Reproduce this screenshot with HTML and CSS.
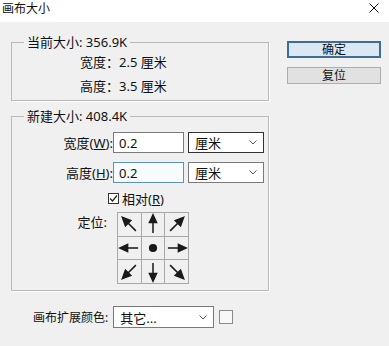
FILE: index.html
```html
<!DOCTYPE html>
<html lang="zh-CN">
<head>
    <meta charset="UTF-8">
    <title>画布大小</title>
    <link rel="stylesheet" href="styles.css">
</head>
<body>
    <div class="dialog">
        <div class="titlebar">
            <span class="title">画布大小</span>
            <svg class="close" width="10" height="10" viewBox="0 0 10 10">
                <line x1="0.5" y1="0.5" x2="9.5" y2="9.5" stroke="#111" stroke-width="1"/>
                <line x1="9.5" y1="0.5" x2="0.5" y2="9.5" stroke="#111" stroke-width="1"/>
            </svg>
        </div>

        <div class="content">
            <div class="main">
                <fieldset class="group group-current">
                    <legend>当前大小: 356.9K</legend>
                    <div class="info-row">宽度：2.5 厘米</div>
                    <div class="info-row">高度：3.5 厘米</div>
                </fieldset>

                <fieldset class="group group-new">
                    <legend>新建大小: 408.4K</legend>

                    <div class="field-row">
                        <label class="field-label" for="newWidth">宽度(<u>W</u>):</label>
                        <input class="text-input" type="text" id="newWidth" value="0.2">
                        <div class="select">
                            <span>厘米</span>
                            <svg class="chevron" width="8" height="5" viewBox="0 0 8 5"><polyline points="0.5,0.5 4,4 7.5,0.5" fill="none" stroke="#555" stroke-width="1"/></svg>
                        </div>
                    </div>

                    <div class="field-row">
                        <label class="field-label" for="newHeight">高度(<u>H</u>):</label>
                        <input class="text-input text-input-focus" type="text" id="newHeight" value="0.2">
                        <div class="select select-light">
                            <span>厘米</span>
                            <svg class="chevron" width="8" height="5" viewBox="0 0 8 5"><polyline points="0.5,0.5 4,4 7.5,0.5" fill="none" stroke="#555" stroke-width="1"/></svg>
                        </div>
                    </div>

                    <div class="check-row">
                        <span class="checkbox">
                            <svg width="9" height="9" viewBox="0 0 9 9"><polyline points="1,4.5 3.5,7 8,1.5" fill="none" stroke="#222" stroke-width="1.2"/></svg>
                        </span>
                        <span>相对(<u>R</u>)</span>
                    </div>

                    <div class="anchor-row">
                        <span class="field-label anchor-label">定位:</span>
                        <div class="anchor-grid">
                            <div class="cell"><svg viewBox="0 0 23 23"><g transform="rotate(-45 11.5 11.5)"><polygon points="11.5,1.5 7.8,9.5 15.2,9.5"/><line x1="11.5" y1="9" x2="11.5" y2="20.5"/></g></svg></div>
                            <div class="cell"><svg viewBox="0 0 23 23"><g><polygon points="11.5,1.5 7.8,9.5 15.2,9.5"/><line x1="11.5" y1="9" x2="11.5" y2="20.5"/></g></svg></div>
                            <div class="cell"><svg viewBox="0 0 23 23"><g transform="rotate(45 11.5 11.5)"><polygon points="11.5,1.5 7.8,9.5 15.2,9.5"/><line x1="11.5" y1="9" x2="11.5" y2="20.5"/></g></svg></div>
                            <div class="cell"><svg viewBox="0 0 23 23"><g transform="rotate(-90 11.5 11.5)"><polygon points="11.5,1.5 7.8,9.5 15.2,9.5"/><line x1="11.5" y1="9" x2="11.5" y2="20.5"/></g></svg></div>
                            <div class="cell"><svg viewBox="0 0 23 23"><circle cx="11.5" cy="11.5" r="3.5"/></svg></div>
                            <div class="cell"><svg viewBox="0 0 23 23"><g transform="rotate(90 11.5 11.5)"><polygon points="11.5,1.5 7.8,9.5 15.2,9.5"/><line x1="11.5" y1="9" x2="11.5" y2="20.5"/></g></svg></div>
                            <div class="cell"><svg viewBox="0 0 23 23"><g transform="rotate(-135 11.5 11.5)"><polygon points="11.5,1.5 7.8,9.5 15.2,9.5"/><line x1="11.5" y1="9" x2="11.5" y2="20.5"/></g></svg></div>
                            <div class="cell"><svg viewBox="0 0 23 23"><g transform="rotate(180 11.5 11.5)"><polygon points="11.5,1.5 7.8,9.5 15.2,9.5"/><line x1="11.5" y1="9" x2="11.5" y2="20.5"/></g></svg></div>
                            <div class="cell"><svg viewBox="0 0 23 23"><g transform="rotate(135 11.5 11.5)"><polygon points="11.5,1.5 7.8,9.5 15.2,9.5"/><line x1="11.5" y1="9" x2="11.5" y2="20.5"/></g></svg></div>
                        </div>
                    </div>
                </fieldset>

                <div class="color-row">
                    <span class="color-label">画布扩展颜色:</span>
                    <div class="select select-wide select-light">
                        <span>其它...</span>
                        <svg class="chevron" width="8" height="5" viewBox="0 0 8 5"><polyline points="0.5,0.5 4,4 7.5,0.5" fill="none" stroke="#555" stroke-width="1"/></svg>
                    </div>
                    <span class="swatch"></span>
                </div>
            </div>

            <div class="buttons">
                <div class="btn btn-default">确定</div>
                <div class="btn">复位</div>
            </div>
        </div>
    </div>
</body>
</html>
```

FILE: styles.css
```css
body {
    margin: 0;
    background-color: #f0f0f0;
    color: #111;
    font-family: "Noto Sans", "Noto Sans CJK SC", sans-serif;
    font-size: 13px;
}

.dialog {
    width: 389px;
    height: 346px;
    background-color: #f0f0f0;
}

.titlebar {
    height: 22px;
    background-color: #fff;
    display: flex;
    align-items: center;
    justify-content: space-between;
    padding: 0 10px 0 2px;
}

.title {
    font-size: 12px;
    line-height: 16px;
    margin-top: -4px;
}

.close {
    margin-top: -6px;
}

.content {
    display: flex;
    padding: 12px 0 0 11px;
}

.main {
    width: 258px;
}

.group {
    margin: 0;
    padding: 0;
    border: 1px solid #b9b9b9;
    box-shadow: 1px 1px 0 #fff;
    min-width: 0;
}

.group legend {
    margin-left: 12px;
    padding: 0 3px;
    line-height: 16px;
}

.group-current {
    padding-bottom: 2px;
}

.info-row {
    padding-left: 68px;
    line-height: 24px;
}

.group-new {
    margin-top: 7px;
    padding-top: 8px;
    padding-bottom: 6px;
}

.field-row {
    display: flex;
    align-items: center;
    height: 21px;
    margin-bottom: 9px;
}

.field-label {
    width: 101px;
    text-align: right;
    white-space: nowrap;
}

.text-input {
    box-sizing: border-box;
    width: 71px;
    height: 21px;
    margin: 0 4px 0 0;
    padding: 0 5px;
    border: 1px solid #7a7a7a;
    background-color: #fff;
    font: inherit;
    color: #111;
    outline: none;
}

.text-input-focus {
    border-color: #5b93b1;
    background-color: #f7fbfc;
}

.select {
    box-sizing: border-box;
    width: 76px;
    height: 21px;
    border: 1px solid #333;
    background-color: #fff;
    display: flex;
    align-items: center;
    justify-content: space-between;
    padding: 0 6px 0 6px;
}

.select-light {
    border-color: #7a7a7a;
}

.check-row {
    display: flex;
    align-items: center;
    height: 20px;
    margin-top: -4px;
    padding-left: 96px;
    gap: 3px;
}

.checkbox {
    box-sizing: border-box;
    width: 11px;
    height: 11px;
    border: 1px solid #333;
    background-color: #fff;
    display: flex;
    align-items: center;
    justify-content: center;
}

.anchor-row {
    display: flex;
    align-items: flex-start;
    margin-top: 4px;
}

.anchor-label {
    box-sizing: border-box;
    padding-right: 6px;
    line-height: 20px;
}

.anchor-grid {
    margin-left: 4px;
    display: grid;
    grid-template-columns: 23px 22px 23px;
    grid-template-rows: 23px 22px 23px;
    gap: 1px;
    padding: 1px;
    background-color: #a8a8a8;
}

.cell {
    background-color: #f0f0f0;
}

.cell svg {
    display: block;
    width: 100%;
    height: 100%;
    fill: #1a1a1a;
    stroke: #1a1a1a;
    stroke-width: 1.6;
}

.color-row {
    display: flex;
    align-items: center;
    margin-top: 15px;
    padding-left: 22px;
}

.color-label {
    font-size: 12px;
    white-space: nowrap;
    margin-right: 5px;
}

.select-wide {
    width: 101px;
    height: 22px;
}

.swatch {
    box-sizing: border-box;
    width: 14px;
    height: 14px;
    margin-left: 5px;
    border: 1px solid #8a8a8a;
    background-color: #f8f8f8;
}

.buttons {
    margin-left: 18px;
    margin-top: 7px;
    display: flex;
    flex-direction: column;
    gap: 9px;
}

.btn {
    box-sizing: border-box;
    width: 94px;
    height: 17px;
    border: 1px solid #adadad;
    background-color: #e1e1e1;
    font-size: 12px;
    line-height: 15px;
    text-align: center;
}

.btn-default {
    border: 2px solid #3b6e94;
    background-color: #dbe8f4;
    line-height: 13px;
}
```
